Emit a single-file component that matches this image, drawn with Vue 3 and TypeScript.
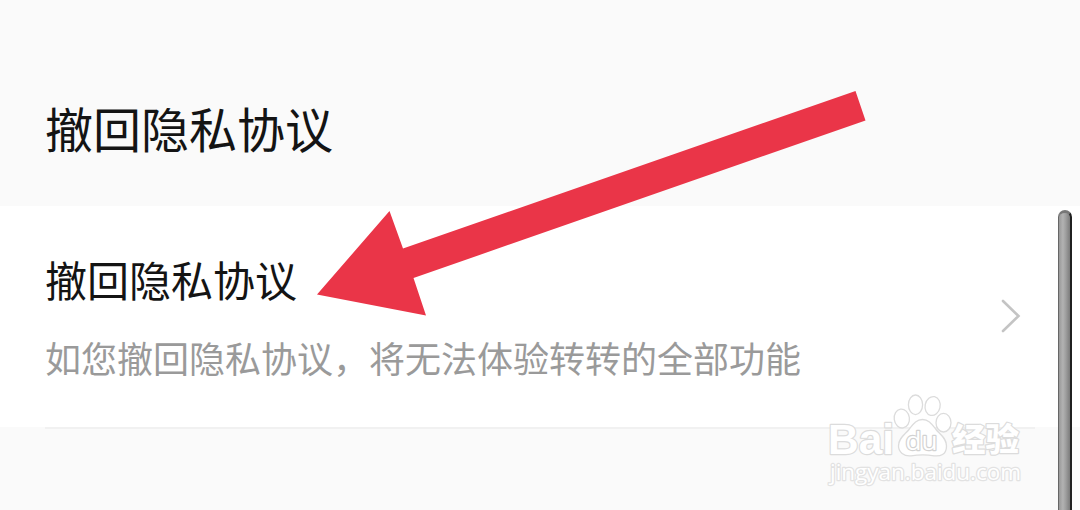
<script setup lang="ts">
const heading: string = '撤回隐私协议'
const item = {
  title: '撤回隐私协议',
  description: '如您撤回隐私协议，将无法体验转转的全部功能',
}
</script>

<template>
  <main class="screen">
    <header class="header">
      <h1 class="heading">{{ heading }}</h1>
    </header>
    <section class="row">
      <div class="copy">
        <h2 class="title">{{ item.title }}</h2>
        <p class="description">{{ item.description }}</p>
      </div>
      <svg class="chevron" width="22" height="38" viewBox="0 0 22 38">
        <path d="M3 4 L18.5 19 L3 34" />
      </svg>
    </section>
    <div class="divider"></div>

    <svg class="arrow" width="1080" height="510" viewBox="0 0 1080 510">
      <polygon points="317,294.5 389.5,211 403,248.5 855.5,91 865.5,120.5 413.5,278 426,315.5" />
    </svg>

    <svg class="watermark" width="220" height="110" viewBox="820 385 220 110">
      <g class="mark">
        <text class="brand" x="828" y="454" textLength="66" lengthAdjust="spacingAndGlyphs">Bai</text>
        <ellipse cx="901.8" cy="418.5" rx="7.6" ry="9.5" transform="rotate(-8 902 418.5)" />
        <ellipse cx="915.5" cy="404.8" rx="7.1" ry="9.8" />
        <ellipse cx="932.6" cy="406" rx="7.5" ry="9.5" transform="rotate(12 932.6 406)" />
        <ellipse cx="943.5" cy="422.7" rx="7.5" ry="9.3" />
        <path d="M922.5 419.5 C929 419.5 932 424.5 936 429.5 C940 434.5 946.5 438 946.5 446 C946.5 455 940 456.5 934 455.8 C926 454.5 918 454.8 911 455.8 C904 456.5 898.5 452 898.5 446 C898.5 438 905 434.5 909 429.5 C913 424.5 916 419.5 922.5 419.5 Z" />
        <text class="du" x="905.5" y="450" textLength="32" lengthAdjust="spacingAndGlyphs">du</text>
        <text class="experience" x="952" y="451" textLength="67" lengthAdjust="spacingAndGlyphs">经验</text>
        <text class="domain" x="830" y="480" textLength="191" lengthAdjust="spacingAndGlyphs">jingyan.baidu.com</text>
      </g>
    </svg>

    <div class="scrollbar"></div>
  </main>
</template>

<style>
body {
  margin: 0;
  overflow: hidden;
}
</style>

<style scoped>
.screen {
  position: relative;
  width: 1080px;
  height: 510px;
  overflow: hidden;
  background: #fafafa;
  font-family: "Noto Sans CJK SC", sans-serif;
}
.header {
  box-sizing: border-box;
  height: 206px;
  padding: 92px 45px 0;
}
.heading,
.title,
.description {
  margin: 0;
  font-weight: 400;
  white-space: nowrap;
}
.heading {
  color: #141414;
  font-size: 48px;
  line-height: 70px;
}
.row {
  box-sizing: border-box;
  display: flex;
  justify-content: space-between;
  height: 221px;
  padding: 43px 58px 0 45px;
  background: #fff;
}
.title {
  color: #141414;
  font-size: 42px;
  line-height: 60px;
}
.description {
  margin-top: 22px;
  color: #9a9a9a;
  font-size: 36px;
  line-height: 52px;
}
.chevron {
  margin-top: 48px;
  fill: none;
  stroke: #c4c4c4;
  stroke-width: 2.6;
  stroke-linecap: round;
}
.divider {
  width: 990px;
  height: 2px;
  margin-left: 45px;
  background: #f1f1f1;
}
.arrow {
  position: absolute;
  inset: 0;
  fill: #ea3548;
}
.watermark {
  position: absolute;
  left: 820px;
  top: 385px;
}
.mark {
  fill: #fff;
  stroke: #dcdcdc;
  stroke-width: 1.3;
}
.mark text {
  paint-order: stroke;
  stroke-width: 2.4;
  stroke-linejoin: round;
}
.mark .brand {
  font: 700 43px "Liberation Sans", sans-serif;
}
.mark .du {
  font: 500 26px "Open Sans", sans-serif;
  stroke: #d2d2d2;
}
.mark .experience {
  font: 800 32px "Noto Sans CJK SC", sans-serif;
}
.mark .domain {
  font: 400 22px "Open Sans", sans-serif;
  stroke: #e2e2e2;
}
.scrollbar {
  position: absolute;
  box-sizing: border-box;
  left: 1058px;
  top: 210px;
  width: 14px;
  height: 320px;
  border: 1px solid #666;
  border-top: 3px solid #777;
  border-right: 2px solid #202020;
  border-radius: 7px;
  background: linear-gradient(90deg, #999, #b2b2b2 35%, #a0a0a0 60%, #7c7c7c);
}
</style>
